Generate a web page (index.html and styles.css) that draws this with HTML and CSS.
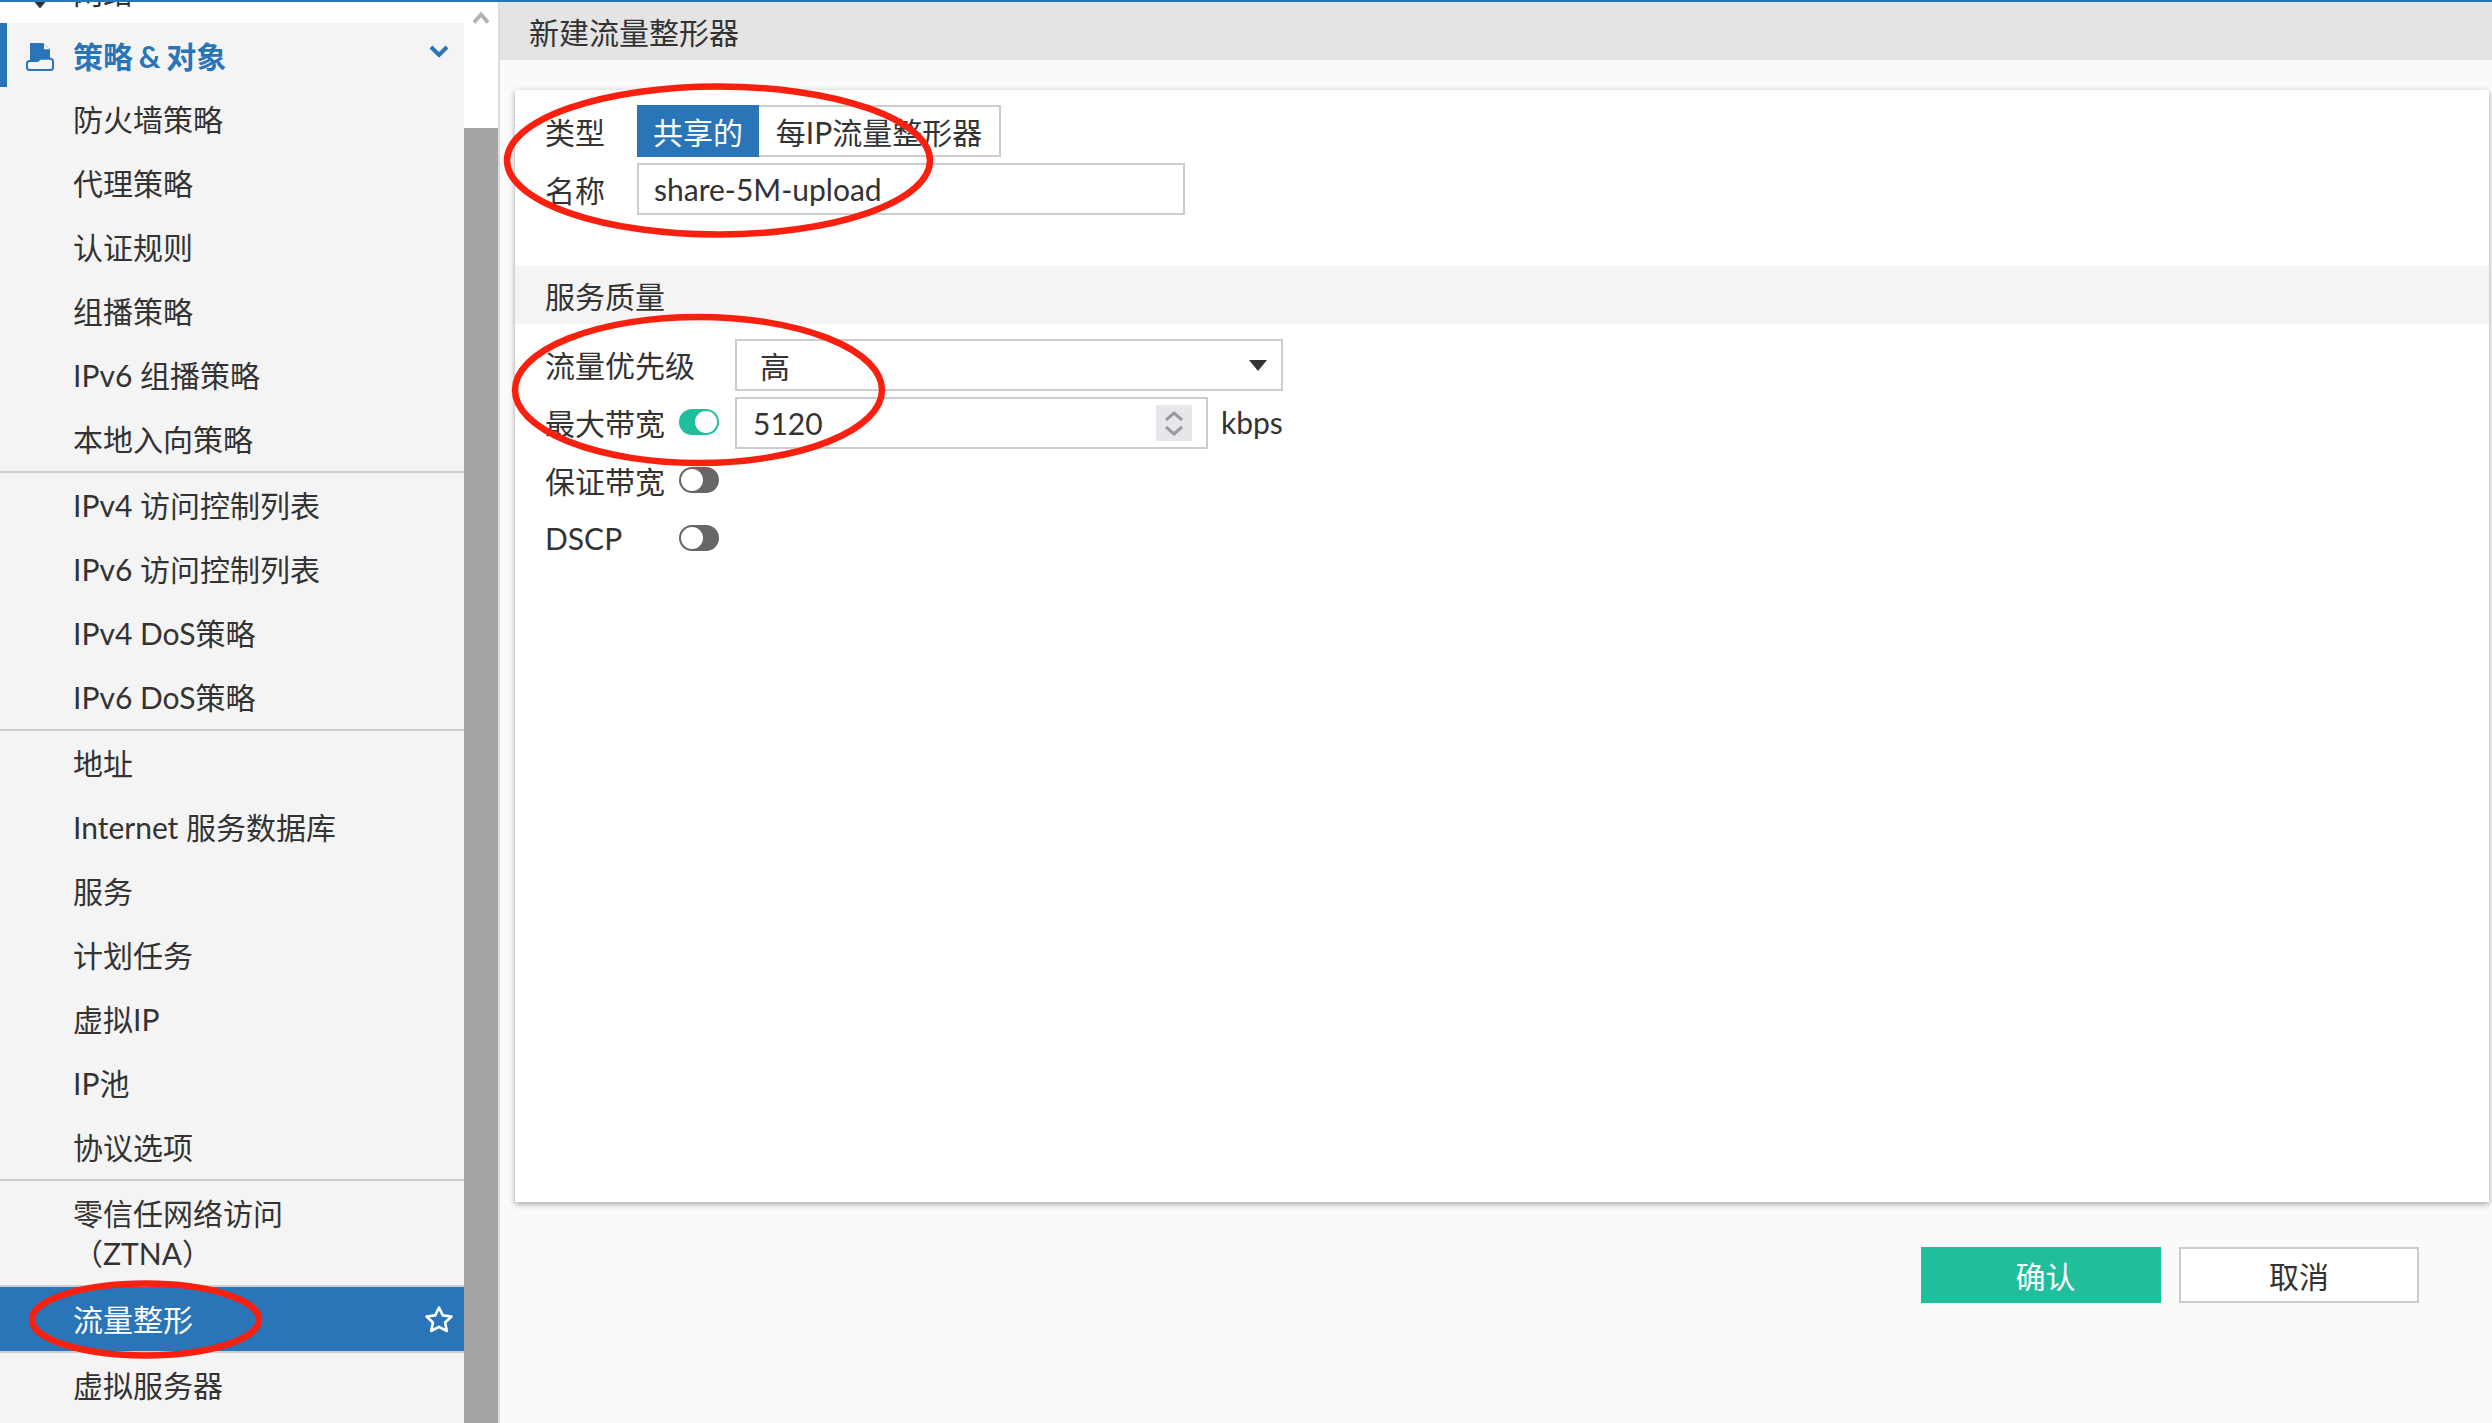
FILE: index.html
```html
<!DOCTYPE html>
<html lang="zh-CN">
<head>
<meta charset="utf-8">
<title>新建流量整形器</title>
<link rel="stylesheet" href="styles.css">
</head>
<body>
<div class="topbar"></div>
<div class="app">
  <nav class="sidebar">
    <div class="nav-scroll">
      <div class="nav-parent-hidden">
        <span class="caret"></span>
        <span>网络</span>
      </div>
      <div class="nav-head">
        <svg class="nav-icon" viewBox="0 0 28 28" aria-hidden="true">
          <path class="i-fill" d="M4 0H17L24 6.500V15H14.500L11.500 17.500H4Z"/>
          <path class="i-fold" d="M18 1.200L23.400 6.300H18Z"/>
          <path class="i-line" d="M3.500 18H11.500L14.500 15.700H24C25.700 15.700 27 17 27 18.500V24.500C27 26 25.700 27 24 27H4C2.300 27 1 26 1 24.500V20.500C1 19 2 18 3.500 18Z"/>
        </svg>
        <span class="nav-head-text">策略 &amp; 对象</span>
        <svg class="nav-chevron" viewBox="0 0 20 14" aria-hidden="true"><path d="M2 3L10 11L18 3"/></svg>
      </div>
      <div class="nav-group first">
        <div class="nav-item">防火墙策略</div>
        <div class="nav-item">代理策略</div>
        <div class="nav-item">认证规则</div>
        <div class="nav-item">组播策略</div>
        <div class="nav-item">IPv6 组播策略</div>
        <div class="nav-item">本地入向策略</div>
      </div>
      <div class="nav-group">
        <div class="nav-item">IPv4 访问控制列表</div>
        <div class="nav-item">IPv6 访问控制列表</div>
        <div class="nav-item">IPv4 DoS策略</div>
        <div class="nav-item">IPv6 DoS策略</div>
      </div>
      <div class="nav-group">
        <div class="nav-item">地址</div>
        <div class="nav-item">Internet 服务数据库</div>
        <div class="nav-item">服务</div>
        <div class="nav-item">计划任务</div>
        <div class="nav-item">虚拟IP</div>
        <div class="nav-item">IP池</div>
        <div class="nav-item">协议选项</div>
      </div>
      <div class="nav-group">
        <div class="nav-item multi">零信任网络访问（ZTNA）</div>
      </div>
      <div class="nav-group">
        <div class="nav-item active">
          <span>流量整形</span>
          <svg class="nav-star" viewBox="0 0 30 28" aria-hidden="true"><path d="M15 2.500L18.800 10.400L27.500 11.500L21.100 17.500L22.800 26L15 21.800L7.200 26L8.900 17.500L2.500 11.500L11.200 10.400Z"/></svg>
        </div>
      </div>
      <div class="nav-group">
        <div class="nav-item">虚拟服务器</div>
      </div>
    </div>
  </nav>
  <div class="scrollbar">
    <div class="scroll-track">
      <svg class="scroll-up" viewBox="0 0 16 13" aria-hidden="true"><path d="M1 11.500L8 3.500L15 11.500"/></svg>
    </div>
    <div class="scroll-thumb"></div>
  </div>
  <main class="content">
    <header class="page-title">新建流量整形器</header>
    <section class="card">
      <div class="form-block">
        <div class="row">
          <div class="label short">类型</div>
          <div class="segmented">
            <div class="seg on">共享的</div>
            <div class="seg">每IP流量整形器</div>
          </div>
        </div>
        <div class="row">
          <div class="label short">名称</div>
          <div class="field name-field">share-5M-upload</div>
        </div>
      </div>
      <div class="band">服务质量</div>
      <div class="form-block qos">
        <div class="row">
          <div class="label long"><span class="label-text">流量优先级</span></div>
          <div class="field select-field"><span>高</span><span class="select-arrow"></span></div>
        </div>
        <div class="row">
          <div class="label long"><span class="label-text">最大带宽</span><span class="toggle is-on"><span class="knob"></span></span></div>
          <div class="field number-field">
            <span>5120</span>
            <span class="spinner">
              <svg viewBox="0 0 36 36" aria-hidden="true"><path d="M10 15L18 8L26 15M10 22L18 29L26 22"/></svg>
            </span>
          </div>
          <div class="unit">kbps</div>
        </div>
        <div class="row">
          <div class="label long"><span class="label-text">保证带宽</span><span class="toggle"><span class="knob"></span></span></div>
        </div>
        <div class="row">
          <div class="label long"><span class="label-text">DSCP</span><span class="toggle"><span class="knob"></span></span></div>
        </div>
      </div>
    </section>
    <footer class="actions">
      <button class="btn primary" type="button">确认</button>
      <button class="btn" type="button">取消</button>
    </footer>
  </main>
</div>
<svg class="marks" viewBox="0 0 2492 1423" aria-hidden="true">
  <ellipse cx="718.500" cy="160.500" rx="211.500" ry="74"/>
  <ellipse cx="698.500" cy="390" rx="183.500" ry="73"/>
  <ellipse cx="145.500" cy="1319.500" rx="113.500" ry="36"/>
</svg>
</body>
</html>
```
FILE: styles.css
```css
* { box-sizing: border-box; }
html, body { margin: 0; height: 100%; }
body {
  position: relative;
  width: 2492px;
  height: 1423px;
  overflow: hidden;
  display: flex;
  flex-direction: column;
  background: #fafafa;
  color: #333;
  font-family: Lato, "Noto Sans CJK SC", sans-serif;
  font-size: 30px;
}
.topbar { height: 2px; flex: none; background: #2a75b8; }
.app { flex: 1; display: flex; min-height: 0; }

/* sidebar */
.sidebar { width: 464px; flex: none; overflow: hidden; background: #f4f4f4; }
.nav-scroll { margin-top: -43px; }
.nav-parent-hidden {
  height: 64px;
  display: flex;
  align-items: center;
  padding-left: 35px;
  gap: 28px;
  background: #fff;
}
.caret {
  width: 0; height: 0;
  margin-top: 28px;
  border-left: 5px solid transparent;
  border-right: 5px solid transparent;
  border-top: 6px solid #333;
  transform: scale(1.2);
}
.nav-head {
  height: 64px;
  display: flex;
  align-items: center;
  padding-left: 26px;
  background: #f4f4f4;
  box-shadow: inset 7px 0 0 #2a75b8;
  color: #2a75b8;
  font-weight: 700;
}
.nav-icon { width: 28px; height: 28px; flex: none; margin-top: 4px; }
.i-fill { fill: #2a75b8; }
.i-fold { fill: #fff; }
.i-line { fill: #f4f4f4; stroke: #2a75b8; stroke-width: 2; }
.nav-head-text { margin-left: 19px; word-spacing: -1.500px; }
.nav-chevron {
  width: 20px; height: 14px;
  margin-left: auto;
  margin-right: 15px;
  margin-top: -8px;
  fill: none;
  stroke: #2a75b8;
  stroke-width: 4;
}
.nav-group { border-top: 2px solid #ccc; }
.nav-group.first { border-top: 0; }
.nav-item {
  min-height: 64px;
  display: flex;
  align-items: center;
  padding: 0 60px 0 73px;
  line-height: 40px;
}
.nav-item.multi { padding-top: 12px; padding-bottom: 12px; display: block; }
.nav-item.active { background: #2a75b8; color: #fff; padding-right: 10px; justify-content: space-between; }
.nav-star { width: 30px; height: 28px; flex: none; fill: none; stroke: #fff; stroke-width: 2.600; stroke-linejoin: round; }

/* scrollbar */
.scrollbar { width: 34px; flex: none; display: flex; flex-direction: column; background: #fff; }
.scroll-track { height: 126px; flex: none; display: flex; justify-content: center; padding-top: 9px; }
.scroll-up { width: 16px; height: 13px; fill: none; stroke: #b4b4b4; stroke-width: 4; }
.scroll-thumb { flex: 1; background: #a5a5a5; }

/* content */
.content {
  flex: 1;
  min-width: 0;
  display: flex;
  flex-direction: column;
  border-left: 2px solid #ddd;
}
.page-title {
  height: 58px;
  flex: none;
  display: flex;
  align-items: center;
  padding-left: 29px;
  background: #e4e4e4;
}
.card {
  flex: 1;
  margin: 30px 3px 0 15px;
  padding-top: 15px;
  background: #fff;
  box-shadow: 0 2px 6px rgba(0, 0, 0, .36);
}
.form-block { display: flex; flex-direction: column; gap: 6px; padding-left: 30px; padding-bottom: 51px; }
.form-block.qos { padding-top: 15px; padding-bottom: 0; }
.band {
  height: 58px;
  display: flex;
  align-items: center;
  padding-left: 30px;
  background: #f4f4f4;
}
.row { height: 52px; display: flex; align-items: center; }
.label { flex: none; display: flex; align-items: center; }
.label.short { width: 92px; }
.label.long { width: 190px; }
.label-text { width: 134px; flex: none; padding-bottom: 2px; white-space: nowrap; }
.segmented { display: flex; height: 52px; }
.seg {
  width: 242px;
  display: flex;
  align-items: center;
  justify-content: center;
  border: 2px solid #ccc;
  border-left-width: 0;
  white-space: nowrap;
}
.seg.on {
  width: 122px;
  border: 0;
  background: #2a75b8;
  color: #fff;
}
.field {
  height: 52px;
  display: flex;
  align-items: center;
  border: 2px solid #ccc;
  background: #fff;
}
.name-field { width: 548px; padding-left: 15px; }
.select-field { width: 548px; padding: 0 14px 0 23px; justify-content: space-between; }
.select-arrow {
  width: 0; height: 0;
  border-left: 9.500px solid transparent;
  border-right: 9.500px solid transparent;
  border-top: 11px solid #333;
}
.number-field { width: 473px; padding: 0 14px 0 16px; justify-content: space-between; }
.spinner { width: 36px; height: 36px; background: #e6e6eb; }
.spinner svg { display: block; width: 36px; height: 36px; fill: none; stroke: #9a9aa3; stroke-width: 3; }
.unit { margin-left: 13px; padding-bottom: 3px; }
.toggle {
  width: 40px;
  height: 26px;
  flex: none;
  display: flex;
  align-items: center;
  padding: 2px;
  margin-bottom: 3px;
  border-radius: 13px;
  background: #666;
}
.knob {
  width: 22px; height: 22px;
  border-radius: 50%;
  background: #fff;
}
.toggle.is-on { background: #20bf9c; justify-content: flex-end; }

/* footer */
.actions {
  height: 221px;
  flex: none;
  display: flex;
  justify-content: flex-end;
  align-items: flex-start;
  gap: 18px;
  padding: 45px 73px 0 0;
}
.btn {
  width: 240px;
  height: 56px;
  border: 2px solid #ccc;
  background: #fff;
  color: #333;
  font: inherit;
  padding: 0;
}
.btn.primary { border: 0; padding-left: 9px; background: #20bf9c; color: #fff; }

/* hand-drawn annotations over the screenshot */
.marks {
  position: absolute;
  left: 0; top: 0;
  width: 2492px;
  height: 1423px;
  pointer-events: none;
  fill: none;
  stroke: #f9200f;
  stroke-width: 6.500;
}
```
